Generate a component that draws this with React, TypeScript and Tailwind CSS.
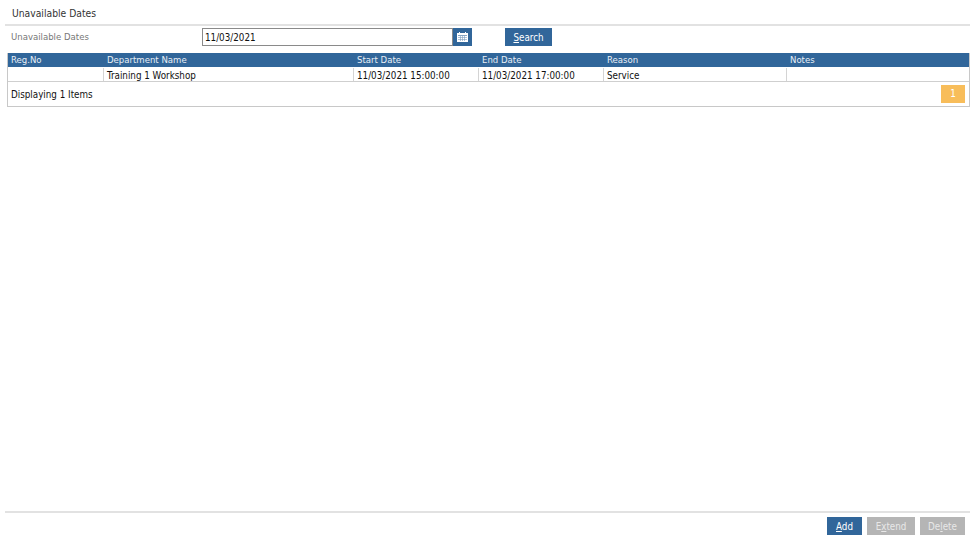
const columns = [
  { title: "Reg.No", width: "w-[96px]", value: "" },
  { title: "Department Name", width: "w-[250px]", value: "Training 1 Workshop" },
  { title: "Start Date", width: "w-[125px]", value: "11/03/2021 15:00:00" },
  { title: "End Date", width: "w-[125px]", value: "11/03/2021 17:00:00" },
  { title: "Reason", width: "w-[183px]", value: "Service" },
  { title: "Notes", width: "flex-1", value: "" },
]

function CalendarIcon() {
  return (
    <svg width="11" height="10" viewBox="0 0 11 10" fill="none">
      <rect x="0" y="1" width="11" height="9" fill="#ffffff" />
      <rect x="2" y="0" width="1" height="2" fill="#ffffff" />
      <rect x="8" y="0" width="1" height="2" fill="#ffffff" />
      <path d="M1 3.5h9" stroke="#31669a" strokeWidth="0.6" />
      <path d="M1 5.5h9M1 7.5h9M3.5 4v5M5.5 4v5M7.5 4v5" stroke="#7c9dbf" strokeWidth="0.6" />
    </svg>
  )
}

export default function App() {
  return (
    <div className="w-[979px] h-[543px] bg-white flex flex-col text-[9.75px] text-[#111] font-['DejaVu_Sans_Condensed','DejaVu_Sans',sans-serif] overflow-hidden">
      <div className="mx-[5px] w-[965px] h-[26px] border-b-2 border-[#e2e2e2] pl-[7px] pt-[6px] leading-[15px] text-[10.25px] text-[#333]">
        Unavailable Dates
      </div>

      <div className="flex items-center h-[18px] mt-[2px] ml-[11px]">
        <div className="w-[191px] pt-[1px] text-[9.5px] text-[#777]">Unavailable Dates</div>
        <input
          readOnly
          value="11/03/2021"
          className="w-[251px] h-[18px] border border-[#8a8a8a] px-[2px] pt-[1px] text-[9.75px] text-[#111] outline-none"
        />
        <div className="w-[19px] h-[18px] bg-[#31669a] flex items-center justify-center">
          <CalendarIcon />
        </div>
        <button className="ml-[33px] w-[47px] h-[18px] pt-[1px] bg-[#31669a] text-white text-[9.75px] leading-none">
          <u>S</u>earch
        </button>
      </div>

      <div className="mt-[7px] ml-[7px] w-[963px] h-[54px] border-x border-b border-[#c8c8c8] flex flex-col">
        <div className="flex h-[14px] bg-[#31669a] text-[#e8eef5] text-[9.5px] leading-[14px]">
          {columns.map((col) => (
            <div key={col.title} className={`${col.width} pl-[3px] truncate`}>
              {col.title}
            </div>
          ))}
        </div>
        <div className="flex h-[14px] mt-[1px] border-b border-[#cfcfcf] leading-[15px]">
          {columns.map((col, i) => (
            <div
              key={col.title}
              className={`${col.width} pl-[3px] truncate ${i < columns.length - 1 ? "border-r border-[#d4d4d4]" : ""}`}
            >
              {col.value}
            </div>
          ))}
        </div>
        <div className="flex-1 flex items-center justify-between pl-[3px] pr-[4px]">
          <span className="pt-[3px]">Displaying 1 Items</span>
          <div className="w-[24px] h-[18px] pt-[1px] bg-[#f8bd5a] text-white flex items-center justify-center">1</div>
        </div>
      </div>

      <div className="flex-1" />

      <div className="mx-[5px] w-[965px] h-[32px] border-t-2 border-[#e2e2e2] flex justify-end gap-[5px] pt-[4px] pr-[5px]">
        <button className="w-[35px] h-[18px] pt-[1px] bg-[#31669a] text-white text-[9.75px] leading-none">
          <u>A</u>dd
        </button>
        <button className="w-[48px] h-[18px] pt-[1px] bg-[#b5b5b5] text-[#e8e8e8] text-[9.75px] leading-none">
          E<u>x</u>tend
        </button>
        <button className="w-[45px] h-[18px] pt-[1px] bg-[#b5b5b5] text-[#e8e8e8] text-[9.75px] leading-none">
          De<u>l</u>ete
        </button>
      </div>
    </div>
  )
}
